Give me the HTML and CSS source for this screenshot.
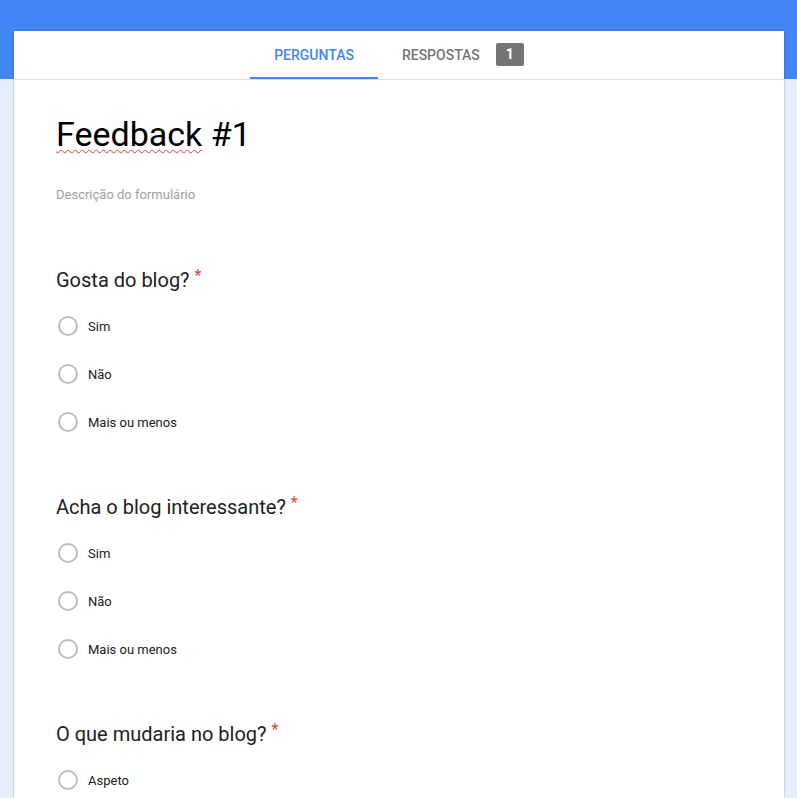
FILE: index.html
```html
<!DOCTYPE html>
<html lang="pt">
<head>
<meta charset="utf-8">
<title>Feedback #1</title>
<link rel="stylesheet" href="styles.css">
</head>
<body>
<div class="card">
  <nav class="tabs">
    <div class="tab active">PERGUNTAS</div>
    <div class="tab">RESPOSTAS <span class="badge">1</span></div>
  </nav>
  <main class="content">
    <h1 class="title"><span class="spell">Feedback</span> #1</h1>
    <p class="desc">Descrição do formulário</p>

    <section class="question">
      <h2 class="q-title">Gosta do blog?<span class="req">*</span></h2>
      <div class="option"><span class="radio"></span><span class="label">Sim</span></div>
      <div class="option"><span class="radio"></span><span class="label">Não</span></div>
      <div class="option"><span class="radio"></span><span class="label">Mais ou menos</span></div>
    </section>

    <section class="question">
      <h2 class="q-title">Acha o blog interessante?<span class="req">*</span></h2>
      <div class="option"><span class="radio"></span><span class="label">Sim</span></div>
      <div class="option"><span class="radio"></span><span class="label">Não</span></div>
      <div class="option"><span class="radio"></span><span class="label">Mais ou menos</span></div>
    </section>

    <section class="question">
      <h2 class="q-title">O que mudaria no blog?<span class="req">*</span></h2>
      <div class="option last"><span class="radio"></span><span class="label">Aspeto</span></div>
    </section>
  </main>
</div>
</body>
</html>
```

FILE: styles.css
```css
html, body {
  margin: 0;
  padding: 0;
}
body {
  font-family: Roboto, "Liberation Sans", Arial, sans-serif;
  background: linear-gradient(#4285f4 0, #4285f4 79px, #e6eefb 79px) no-repeat;
  background-color: #e6eefb;
  height: 798px;
  overflow: hidden;
}
.card {
  margin: 31px 0 0 14px;
  width: 770px;
  height: 767px;
  overflow: hidden;
  background: #fff;
  box-shadow: 0 0 2px rgba(0, 0, 0, 0.28);
}
.tabs {
  height: 48px;
  display: flex;
  justify-content: center;
  border-bottom: 1px solid #e0e0e0;
}
.tab {
  display: flex;
  align-items: center;
  padding: 2px 24px 0;
  font-size: 14px;
  font-weight: 500;
  color: #757575;
  border-bottom: 2px solid transparent;
}
.tab.active {
  color: #4285f4;
  border-bottom-color: #4285f4;
}
.badge {
  display: inline-flex;
  align-items: center;
  justify-content: center;
  margin-left: 16px;
  margin-top: -2px;
  width: 28px;
  height: 23px;
  border-radius: 2px;
  background: #757575;
  color: #fff;
  font-size: 14px;
  font-weight: 700;
}
.content {
  padding: 32px 42px 0 42px;
}
.title {
  margin: 0;
  font-size: 34px;
  line-height: 44px;
  font-weight: 400;
  color: #000;
}
.spell {
  text-decoration: underline wavy #e53935;
  text-decoration-thickness: 1px;
  text-underline-offset: 3px;
}
.desc {
  margin: 29px 0 0;
  font-size: 13px;
  line-height: 20px;
  color: #a0a0a0;
}
.question {
  margin-top: 61px;
}
.question + .question {
  margin-top: 47px;
}
.q-title {
  margin: 0 0 8px;
  font-size: 20px;
  line-height: 28px;
  font-weight: 400;
  color: #212121;
}
.req {
  color: #db4437;
  font-size: 16px;
  vertical-align: top;
  margin-left: 5px;
  line-height: 20px;
}
.option {
  height: 48px;
  display: flex;
  align-items: center;
}
.option.last {
  height: 40px;
  align-items: flex-end;
  padding-bottom: 0;
}
.option.last .radio,
.option.last .label {
  align-self: center;
  margin-top: 8px;
}
.radio {
  box-sizing: border-box;
  width: 20px;
  height: 20px;
  border: 2px solid #bdbdbd;
  border-radius: 50%;
  margin-left: 2px;
  margin-right: 10px;
  flex: none;
}
.label {
  font-size: 13px;
  color: #212121;
}
```
